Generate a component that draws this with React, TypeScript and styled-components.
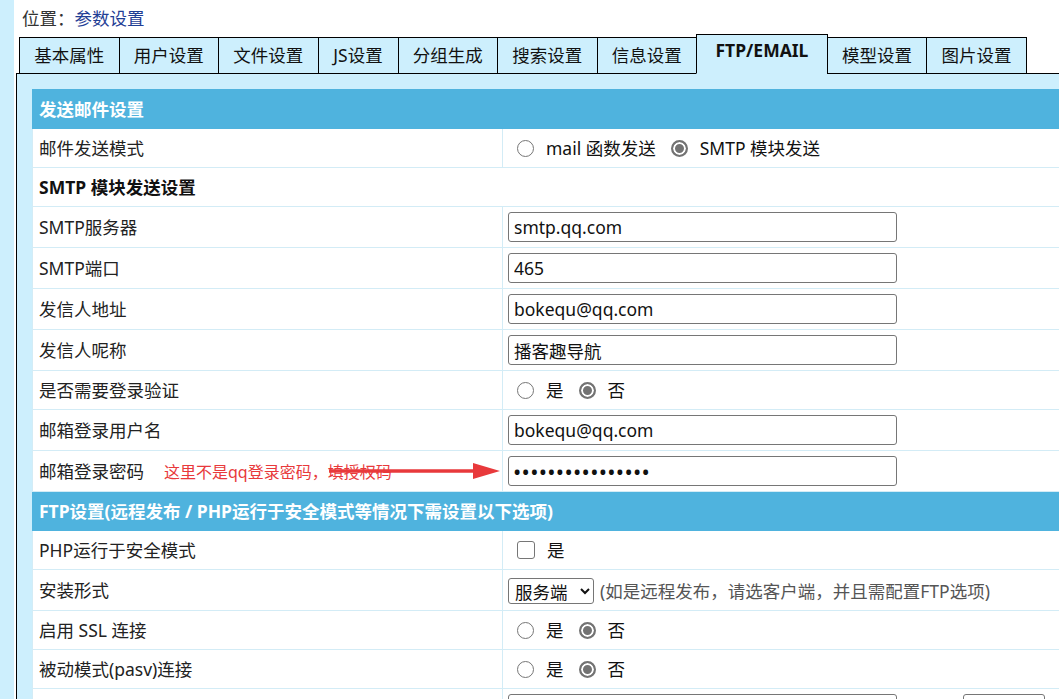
import * as React from "react";
import styled, { createGlobalStyle } from "styled-components";

const COLORS = {
  frame: "#cdeffd",
  edge: "#000",
  header: "#4fb3de",
  line: "#d3ecf6",
  outline: "#9fd5ec",
  text: "#222",
  link: "#1f3e95",
  hint: "#555",
  note: "#e8393b",
  field: "#767676",
};

const FONT = `"Noto Sans", "Noto Sans CJK SC", sans-serif`;

const GlobalStyle = createGlobalStyle`
  html, body {
    margin: 0;
    background: #fff;
    overflow: hidden;
    font-family: ${FONT};
    font-size: 17.5px;
    color: ${COLORS.text};
  }
`;

const Page = styled.div`
  display: flex;
  min-height: 100vh;
`;

const Strip = styled.div`
  width: 14px;
  flex: none;
  background: ${COLORS.frame};
`;

const Main = styled.div`
  flex: 1;
  min-width: 0;
  padding-left: 2px;
  display: flex;
  flex-direction: column;
`;

const Breadcrumb = styled.div`
  height: 32px;
  padding: 2px 0 0 6px;
  line-height: 32px;
  color: #333;
`;

const Crumb = styled.a`
  color: ${COLORS.link};
  text-decoration: none;
`;

const TabBar = styled.div`
  display: flex;
  align-items: flex-end;
  height: 40px;
  margin: 0 0 -1px 3px;
  position: relative;
  z-index: 1;
`;

const Tab = styled.div<{ $active?: boolean }>`
  box-sizing: border-box;
  min-width: 81px;
  height: ${(p) => (p.$active ? 40 : 37)}px;
  padding: 0 ${(p) => (p.$active ? 18.5 : 14.25)}px;
  line-height: ${(p) => (p.$active ? 30 : 34)}px;
  text-align: center;
  border: 1px solid ${COLORS.edge};
  border-bottom-color: ${(p) => (p.$active ? COLORS.frame : COLORS.edge)};
  background: ${COLORS.frame};
  font-weight: ${(p) => (p.$active ? 700 : 400)};
  color: #111;
  white-space: nowrap;
  cursor: pointer;

  & + & {
    margin-left: -1px;
  }
`;

const Panel = styled.div`
  flex: 1;
  border-top: 1px solid ${COLORS.edge};
  border-left: 1px solid ${COLORS.edge};
  background: ${COLORS.frame};
  padding: 15px 0 0 15px;
`;

const Table = styled.table`
  width: 1100px;
  border-collapse: collapse;
  table-layout: fixed;
  background: #fff;
  border: 1px solid ${COLORS.outline};
`;

const LabelCol = styled.col`
  width: 470px;
`;

const Cell = styled.td`
  border: 1px solid ${COLORS.line};
  padding: 5px 6px;
  line-height: 28px;
  vertical-align: middle;
  white-space: nowrap;
`;

const LabelCell = styled(Cell)`
  position: relative;
`;

const ValueCell = styled(Cell)`
  padding-left: 5px;
`;

const HeaderCell = styled(Cell)`
  background: ${COLORS.header};
  border-color: ${COLORS.header};
  color: #fff;
  font-weight: 700;
`;

const SectionCell = styled(Cell)`
  font-weight: 700;
  color: #111;
`;

const TextInput = styled.input<{ $width?: number }>`
  box-sizing: border-box;
  display: block;
  width: ${(p) => p.$width ?? 389}px;
  height: 30px;
  padding: 0 5px;
  border: 1px solid ${COLORS.field};
  border-radius: 3px;
  font-family: ${FONT};
  font-size: 17.5px;
  color: #111;
  outline: none;
`;

const PasswordInput = styled(TextInput)`
  font-size: 22px;
  letter-spacing: 0.3px;
  padding-left: 4px;
`;

const InputPair = styled.div`
  display: flex;
  align-items: center;
  gap: 66px;
`;

const Choices = styled.div`
  display: flex;
  align-items: center;
  padding-left: 9px;
`;

const Choice = styled.label`
  display: inline-flex;
  align-items: center;
  gap: 12px;
  margin-right: 15px;
  color: #111;
`;

const RadioMark = styled.span<{ $checked?: boolean }>`
  box-sizing: border-box;
  width: 17px;
  height: 17px;
  border-radius: 50%;
  border: ${(p) => (p.$checked ? "2px solid #737373" : "1px solid #767676")};
  background: ${(p) => (p.$checked ? "#737373" : "#fff")};
  box-shadow: ${(p) => (p.$checked ? "inset 0 0 0 2px #fff" : "none")};
`;

const CheckMark = styled.span`
  box-sizing: border-box;
  width: 18px;
  height: 18px;
  border: 1px solid ${COLORS.field};
  border-radius: 3px;
  background: #fff;
`;

const Select = styled.select`
  box-sizing: border-box;
  width: 86px;
  height: 26px;
  padding: 0 2px;
  border: 1px solid ${COLORS.field};
  border-radius: 3px;
  background: #fff;
  font-family: ${FONT};
  font-size: 17.5px;
  color: #111;
  vertical-align: middle;
`;

const Hint = styled.span`
  margin-left: 6px;
  color: ${COLORS.hint};
  vertical-align: middle;
`;

const Note = styled.span`
  margin-left: 20px;
  font-size: 16px;
  color: ${COLORS.note};
`;

const Arrow = styled.svg`
  position: absolute;
  left: 296px;
  top: 11px;
`;

const tabs = ["基本属性", "用户设置", "文件设置", "JS设置", "分组生成", "搜索设置", "信息设置", "FTP/EMAIL", "模型设置", "图片设置"];

type Option = { label: string; checked?: boolean };

const Radios = ({ options }: { options: Option[] }) => (
  <Choices>
    {options.map((o) => (
      <Choice key={o.label}>
        <RadioMark $checked={o.checked} />
        {o.label}
      </Choice>
    ))}
  </Choices>
);

const yesNo: Option[] = [{ label: "是" }, { label: "否", checked: true }];

const Row = ({ label, children }: { label: string; children: React.ReactNode }) => (
  <tr>
    <LabelCell>{label}</LabelCell>
    <ValueCell>{children}</ValueCell>
  </tr>
);

export default function App() {
  return (
    <Page>
      <GlobalStyle />
      <Strip />
      <Main>
        <Breadcrumb>
          位置：<Crumb href="#">参数设置</Crumb>
        </Breadcrumb>
        <TabBar>
          {tabs.map((t) => (
            <Tab key={t} $active={t === "FTP/EMAIL"}>
              {t}
            </Tab>
          ))}
        </TabBar>
        <Panel>
          <Table>
            <colgroup>
              <LabelCol />
              <col />
            </colgroup>
            <tbody>
              <tr>
                <HeaderCell colSpan={2}>发送邮件设置</HeaderCell>
              </tr>
              <Row label="邮件发送模式">
                <Radios options={[{ label: "mail 函数发送" }, { label: "SMTP 模块发送", checked: true }]} />
              </Row>
              <tr>
                <SectionCell colSpan={2}>SMTP 模块发送设置</SectionCell>
              </tr>
              <Row label="SMTP服务器">
                <TextInput defaultValue="smtp.qq.com" />
              </Row>
              <Row label="SMTP端口">
                <TextInput defaultValue="465" />
              </Row>
              <Row label="发信人地址">
                <TextInput defaultValue="bokequ@qq.com" />
              </Row>
              <Row label="发信人呢称">
                <TextInput defaultValue="播客趣导航" />
              </Row>
              <Row label="是否需要登录验证">
                <Radios options={yesNo} />
              </Row>
              <Row label="邮箱登录用户名">
                <TextInput defaultValue="bokequ@qq.com" />
              </Row>
              <tr>
                <LabelCell>
                  邮箱登录密码
                  <Note>这里不是qq登录密码，填授权码</Note>
                  <Arrow width="172" height="18" viewBox="0 0 172 18">
                    <line x1="0" y1="9" x2="150" y2="9" stroke={COLORS.note} strokeWidth="3.5" />
                    <polygon points="144,1 171,9 144,17" fill={COLORS.note} />
                  </Arrow>
                </LabelCell>
                <ValueCell>
                  <PasswordInput type="password" defaultValue="abcdefghijklmnop" />
                </ValueCell>
              </tr>
              <tr>
                <HeaderCell colSpan={2}>FTP设置(远程发布 / PHP运行于安全模式等情况下需设置以下选项)</HeaderCell>
              </tr>
              <Row label="PHP运行于安全模式">
                <Choices>
                  <Choice>
                    <CheckMark />是
                  </Choice>
                </Choices>
              </Row>
              <Row label="安装形式">
                <Select defaultValue="server">
                  <option value="server">服务端</option>
                  <option value="client">客户端</option>
                </Select>
                <Hint>(如是远程发布，请选客户端，并且需配置FTP选项)</Hint>
              </Row>
              <Row label="启用 SSL 连接">
                <Radios options={yesNo} />
              </Row>
              <Row label="被动模式(pasv)连接">
                <Radios options={yesNo} />
              </Row>
              <tr>
                <LabelCell />
                <ValueCell>
                  <InputPair>
                    <TextInput />
                    <TextInput $width={82} />
                  </InputPair>
                </ValueCell>
              </tr>
            </tbody>
          </Table>
        </Panel>
      </Main>
    </Page>
  );
}
